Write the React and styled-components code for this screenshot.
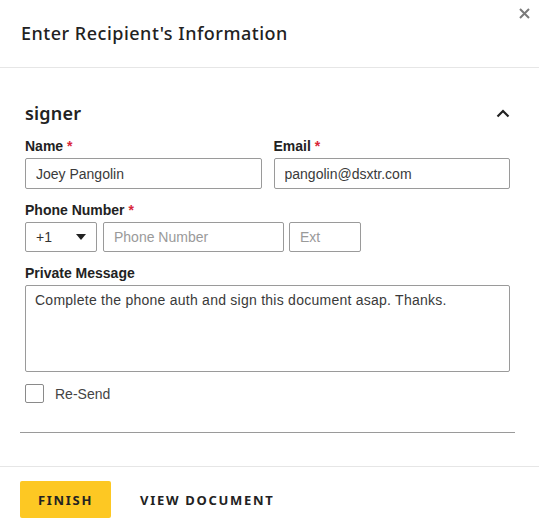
import styled, { createGlobalStyle } from 'styled-components';

const Global = createGlobalStyle`
	html, body {
		margin: 0;
		padding: 0;
		background: #fff;
	}
	* {
		box-sizing: border-box;
	}
`;

const Modal = styled.div`
	position: relative;
	width: 539px;
	height: 522px;
	background: #fff;
	color: #222;
	font-family: "Liberation Sans", Arial, sans-serif;
`;

const Header = styled.header`
	height: 68px;
	display: flex;
	align-items: center;
	padding: 0 21px 2px;
	border-bottom: 1px solid #e6e6e6;
`;

const Title = styled.h2`
	margin: 0;
	font-family: "Noto Sans", sans-serif;
	font-size: 18px;
	font-weight: 500;
	letter-spacing: 0.5px;
	color: #222;
`;

const Close = styled.button`
	position: absolute;
	top: 5px;
	right: 7px;
	width: 16px;
	height: 16px;
	padding: 0;
	border: 0;
	background: none;
	display: flex;
	align-items: center;
	justify-content: center;
`;

const Body = styled.div`
	padding: 0 24px 0 20px;
`;

const Section = styled.section`
	padding: 0 5px;
`;

const SectionHead = styled.div`
	display: flex;
	align-items: center;
	justify-content: space-between;
	height: 26px;
	margin-top: 32px;
	margin-bottom: 12px;
`;

const SectionTitle = styled.h3`
	margin: 0;
	font-family: "Noto Sans", sans-serif;
	font-size: 18px;
	font-weight: 600;
	letter-spacing: 0.2px;
	color: #222;
`;

const Row = styled.div`
	display: flex;
	gap: ${p => p.$gap || 12}px;
	margin-top: ${p => p.$top || 0}px;
`;

const Field = styled.div`
	display: flex;
	flex-direction: column;
	flex: 1;
`;

const Label = styled.label`
	display: block;
	font-size: 14px;
	font-weight: bold;
	color: #222;
	line-height: 16px;
	margin-bottom: 4px;

	& > span {
		color: #d9263a;
	}
`;

const Input = styled.input`
	height: ${p => p.$h || 30}px;
	width: ${p => p.$w ? `${p.$w}px` : '100%'};
	border: 1px solid #9a9a9a;
	border-radius: 2px;
	padding: 0 10px;
	font-family: "Liberation Sans", Arial, sans-serif;
	font-size: 14px;
	color: #3a3a3a;
	background: #fff;
	outline: none;

	&::placeholder {
		color: #9a9a9a;
	}
`;

const Select = styled.div`
	width: 72px;
	height: 30px;
	margin-right: 1px;
	border: 1px solid #9a9a9a;
	border-radius: 2px;
	display: flex;
	align-items: center;
	justify-content: space-between;
	padding: 0 10px;
	font-size: 14px;
	color: #333;
`;

const TextArea = styled.textarea`
	display: block;
	width: 100%;
	height: 87px;
	border: 1px solid #9a9a9a;
	border-radius: 2px;
	padding: 6px 9px;
	resize: none;
	font-family: "Liberation Sans", Arial, sans-serif;
	font-size: 14px;
	letter-spacing: 0.25px;
	line-height: 17px;
	color: #3a3a3a;
	outline: none;
`;

const Check = styled.label`
	display: flex;
	align-items: center;
	gap: 11px;
	margin-top: 12px;
	font-size: 14px;
	color: #444;
`;

const Box = styled.span`
	width: 19px;
	height: 19px;
	border: 1px solid #8a8a8a;
	border-radius: 2px;
`;

const Rule = styled.hr`
	margin: 29px 0 0 0;
	border: 0;
	border-top: 1px solid #9a9a9a;
`;

const Footer = styled.footer`
	margin-top: 33px;
	border-top: 1px solid #e6e6e6;
	padding: 14px 20px 0;
	display: flex;
	align-items: center;
	gap: 29px;
`;

const Btn = styled.button`
	height: 37px;
	width: ${p => p.$primary ? '91px' : 'auto'};
	padding: 0;
	border: 0;
	border-radius: 2px;
	background: ${p => p.$primary ? '#fdc823' : 'transparent'};
	color: #222;
	font-family: "Noto Sans", sans-serif;
	font-weight: 700;
	font-size: 13px;
	letter-spacing: 1.7px;
	text-transform: uppercase;
`;

const App = () => {
	return (
		<>
			<Global />
			<Modal>
				<Header>
					<Title>Enter Recipient's Information</Title>
				</Header>
				<Close aria-label="close">
					<svg width="11" height="11" viewBox="0 0 11 11">
						<path d="M1 1L10 10M10 1L1 10" stroke="#7a7a7a" strokeWidth="2" />
					</svg>
				</Close>

				<Body>
					<Section>
						<SectionHead>
							<SectionTitle>signer</SectionTitle>
							<svg width="14" height="9" viewBox="0 0 14 9">
								<path d="M1.5 7.5L7 2L12.5 7.5" stroke="#222" strokeWidth="2.2" fill="none" />
							</svg>
						</SectionHead>

						<Row>
							<Field>
								<Label>Name<span> *</span></Label>
								<Input $h={31} defaultValue="Joey Pangolin" />
							</Field>
							<Field>
								<Label>Email<span> *</span></Label>
								<Input $h={31} defaultValue="pangolin@dsxtr.com" />
							</Field>
						</Row>

						<Row $top={13}>
							<Field>
								<Label>Phone Number<span> *</span></Label>
								<Row $gap={5}>
									<Select>
										<span>+1</span>
										<svg width="10" height="6" viewBox="0 0 10 6">
											<path d="M0 0H10L5 6Z" fill="#222" />
										</svg>
									</Select>
									<Input $w={181} placeholder="Phone Number" />
									<Input $w={72} placeholder="Ext" />
								</Row>
							</Field>
						</Row>

						<Row $top={13}>
							<Field>
								<Label>Private Message</Label>
								<TextArea defaultValue="Complete the phone auth and sign this document asap. Thanks." />
							</Field>
						</Row>

						<Check>
							<Box />
							Re-Send
						</Check>
					</Section>
					<Rule />
				</Body>

				<Footer>
					<Btn $primary>Finish</Btn>
					<Btn>View Document</Btn>
				</Footer>
			</Modal>
		</>
	);
};

export default App;
